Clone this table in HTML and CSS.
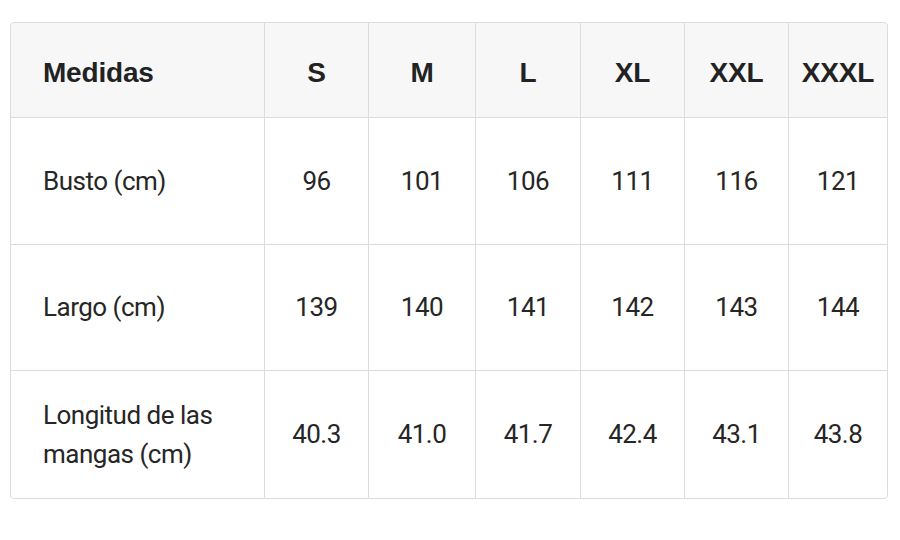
FILE: index.html
```html
<!DOCTYPE html>
<html lang="es">
<head>
<meta charset="utf-8">
<title>Medidas</title>
<link rel="stylesheet" href="styles.css">
</head>
<body>
<div class="size-table">
  <div class="cell head first">Medidas</div>
  <div class="cell head">S</div>
  <div class="cell head">M</div>
  <div class="cell head">L</div>
  <div class="cell head">XL</div>
  <div class="cell head">XXL</div>
  <div class="cell head">XXXL</div>

  <div class="cell first">Busto (cm)</div>
  <div class="cell">96</div>
  <div class="cell">101</div>
  <div class="cell">106</div>
  <div class="cell">111</div>
  <div class="cell">116</div>
  <div class="cell">121</div>

  <div class="cell first">Largo (cm)</div>
  <div class="cell">139</div>
  <div class="cell">140</div>
  <div class="cell">141</div>
  <div class="cell">142</div>
  <div class="cell">143</div>
  <div class="cell">144</div>

  <div class="cell first">Longitud de las<br>mangas (cm)</div>
  <div class="cell">40.3</div>
  <div class="cell">41.0</div>
  <div class="cell">41.7</div>
  <div class="cell">42.4</div>
  <div class="cell">43.1</div>
  <div class="cell">43.8</div>
</div>
</body>
</html>
```

FILE: styles.css
```css
html, body {
  margin: 0;
  padding: 0;
  background: #ffffff;
}

body {
  padding: 22px 0 0 10px;
  font-family: Roboto, "Liberation Sans", sans-serif;
  color: #262626;
}

.size-table {
  display: grid;
  grid-template-columns: 253px 103px 106px 104px 103px 103px 98px;
  grid-template-rows: 94px 126px 125px 127px;
  gap: 1px;
  width: max-content;
  background: #dcdcdc;
  border: 1px solid #dcdcdc;
  border-radius: 4px;
  overflow: hidden;
}

.cell {
  background: #ffffff;
  display: flex;
  align-items: center;
  justify-content: center;
  font-size: 26px;
  line-height: 39px;
  letter-spacing: -0.5px;
  text-align: center;
}

.cell.first {
  justify-content: flex-start;
  text-align: left;
  padding-left: 32px;
}

.cell.head {
  background: #f7f7f7;
  font-family: "Liberation Sans", Arial, sans-serif;
  font-weight: bold;
  font-size: 28px;
  letter-spacing: -0.2px;
  padding-top: 4px;
  color: #222222;
}
```
